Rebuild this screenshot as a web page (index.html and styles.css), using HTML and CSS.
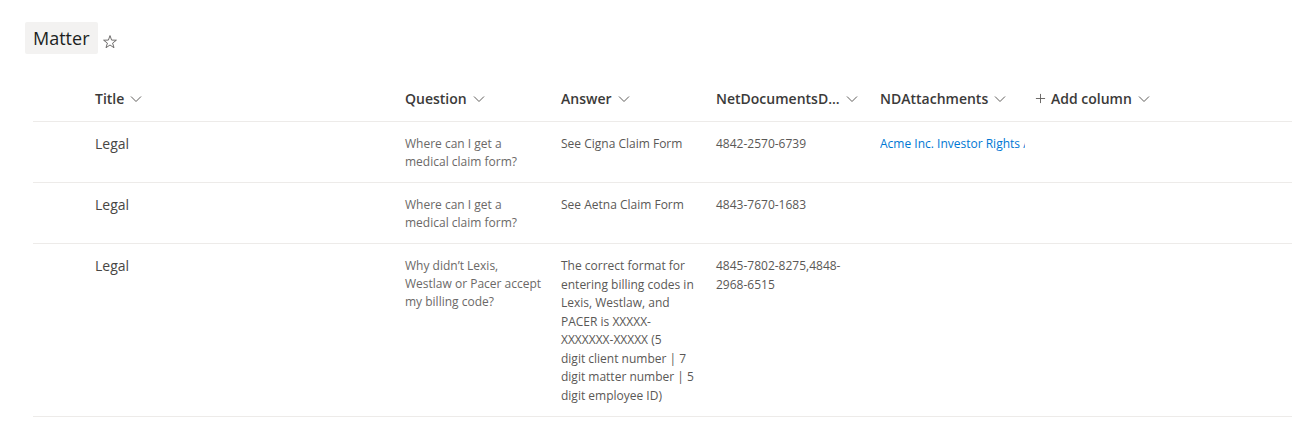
FILE: index.html
```html
<!DOCTYPE html>
<html>
<head>
<meta charset="utf-8">
<link rel="stylesheet" href="styles.css">
</head>
<body>
<div class="page">
  <div class="titlebar">
    <h1 class="list-title">Matter</h1>
    <svg class="star" width="16" height="16" viewBox="0 0 16 16"><path d="M8 1.6 L9.6 6.1 L14.4 6.2 L10.6 9.1 L12 13.7 L8 11 L4 13.7 L5.4 9.1 L1.6 6.2 L6.4 6.1 Z" fill="none" stroke="#605e5c" stroke-width="0.9" stroke-linejoin="miter"/></svg>
  </div>
  <div class="list">
    <div class="row head">
      <div class="cell sel"></div>
      <div class="cell hcell"><span class="hlabel">Title</span><svg class="chev" viewBox="0 0 12 8"><path d="M1 1.5 L6 6.5 L11 1.5" fill="none" stroke="#605e5c" stroke-width="1"/></svg></div>
      <div class="cell hcell"><span class="hlabel">Question</span><svg class="chev" viewBox="0 0 12 8"><path d="M1 1.5 L6 6.5 L11 1.5" fill="none" stroke="#605e5c" stroke-width="1"/></svg></div>
      <div class="cell hcell"><span class="hlabel">Answer</span><svg class="chev" viewBox="0 0 12 8"><path d="M1 1.5 L6 6.5 L11 1.5" fill="none" stroke="#605e5c" stroke-width="1"/></svg></div>
      <div class="cell hcell"><span class="hlabel trunc">NetDocumentsD...</span><svg class="chev" viewBox="0 0 12 8"><path d="M1 1.5 L6 6.5 L11 1.5" fill="none" stroke="#605e5c" stroke-width="1"/></svg></div>
      <div class="cell hcell"><span class="hlabel">NDAttachments</span><svg class="chev" viewBox="0 0 12 8"><path d="M1 1.5 L6 6.5 L11 1.5" fill="none" stroke="#605e5c" stroke-width="1"/></svg></div>
      <div class="cell hcell add"><svg class="plus" viewBox="0 0 12 12"><path d="M6 1 V11 M1 6 H11" fill="none" stroke="#605e5c" stroke-width="1"/></svg><span class="hlabel">Add column</span><svg class="chev" viewBox="0 0 12 8"><path d="M1 1.5 L6 6.5 L11 1.5" fill="none" stroke="#605e5c" stroke-width="1"/></svg></div>
    </div>
    <div class="row">
      <div class="cell sel"></div>
      <div class="cell title">Legal</div>
      <div class="cell q">Where can I get a medical claim form?</div>
      <div class="cell a">See Cigna Claim Form</div>
      <div class="cell a">4842-2570-6739</div>
      <div class="cell a"><a class="link" href="#">Acme Inc. Investor Rights Agreement.pdf</a></div>
      <div class="cell"></div>
    </div>
    <div class="row">
      <div class="cell sel"></div>
      <div class="cell title">Legal</div>
      <div class="cell q">Where can I get a medical claim form?</div>
      <div class="cell a">See Aetna Claim Form</div>
      <div class="cell a">4843-7670-1683</div>
      <div class="cell a"></div>
      <div class="cell"></div>
    </div>
    <div class="row">
      <div class="cell sel"></div>
      <div class="cell title">Legal</div>
      <div class="cell q">Why didn’t Lexis, Westlaw or Pacer accept my billing code?</div>
      <div class="cell a ans">The correct format for entering billing codes in Lexis, Westlaw, and PACER is XXXXX-XXXXXXX-XXXXX (5<br>digit client number | 7 digit matter number | 5 digit employee ID)</div>
      <div class="cell a">4845-7802-8275,4848-2968-6515</div>
      <div class="cell a"></div>
      <div class="cell"></div>
    </div>
  </div>
</div>
</body>
</html>
```
FILE: styles.css
```css
* { box-sizing: border-box; }
html, body { margin: 0; padding: 0; background: #ffffff; }
body {
  font-family: "Segoe UI", "Open Sans", "Noto Sans", sans-serif;
  color: #323130;
}
.page { padding: 22px 13px 0 25px; }
.titlebar { display: flex; align-items: center; gap: 4px; }
.list-title {
  margin: 0;
  font-size: 18px;
  font-weight: 400;
  background: #f3f2f1;
  border-radius: 2px;
  padding: 0 8px;
  height: 32px;
  line-height: 32px;
  color: #201f1e;
}
.star { width: 16px; height: 16px; margin-top: 7px; }
.list { margin: 22px 0 0 8px; }
.row {
  display: grid;
  grid-template-columns: 62px 310px 156px 155px 164px 155px 1fr;
  border-bottom: 1px solid #edebe9;
  padding-top: 13px;
  padding-bottom: 11px;
}
.row.head { padding: 0; height: 46px; align-items: center; }
.cell { padding-right: 14px; min-width: 0; }
.hcell {
  display: flex;
  align-items: center;
  font-size: 14px;
  font-weight: 600;
  color: #3b3a39;
  padding-right: 6px;
}
.hlabel { white-space: nowrap; }
.hlabel.trunc { overflow: hidden; }
.chev { width: 12px; height: 8px; margin-left: 6px; flex: none; }
.plus { width: 11px; height: 11px; margin-right: 5px; flex: none; }
.title { font-size: 14px; line-height: 18px; color: #484644; }
.q { font-size: 12px; line-height: 18px; color: #6b6967; }
.a { font-size: 12px; line-height: 18.5px; color: #5a5856; }
.ans { padding-right: 21px; }
.link {
  display: block;
  color: #0078d4;
  text-decoration: none;
  white-space: nowrap;
  overflow: hidden;
  margin-right: -4px;
}
```
